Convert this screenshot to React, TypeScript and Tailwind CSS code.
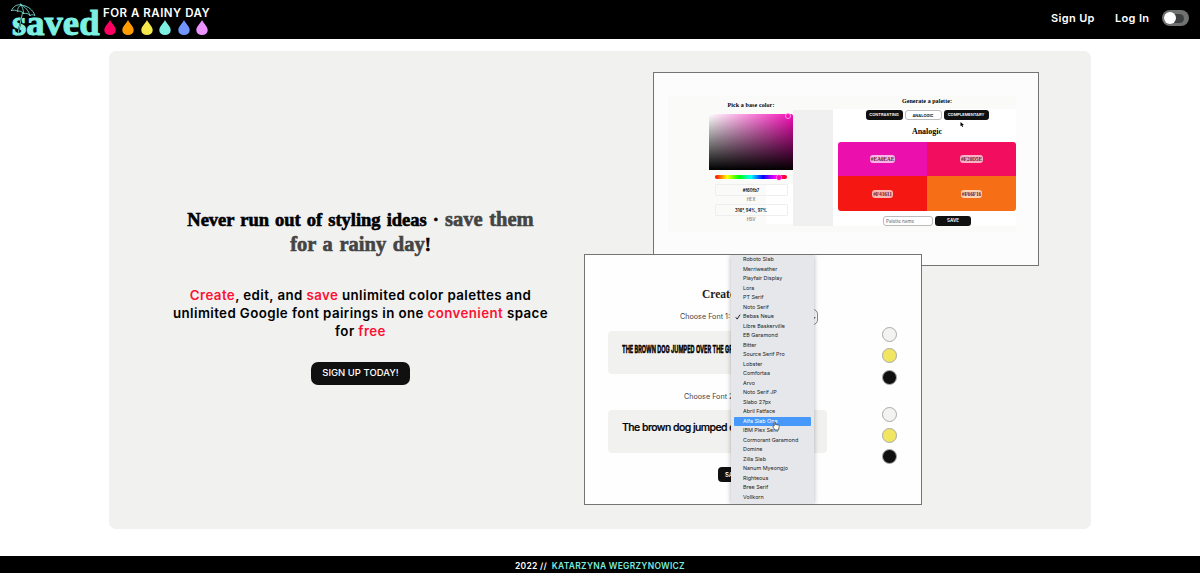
const fontNames = [
  "Roboto Slab", "Merriweather", "Playfair Display", "Lora", "PT Serif", "Noto Serif",
  "Bebas Neue", "Libre Baskerville", "EB Garamond", "Bitter", "Source Serif Pro", "Lobster",
  "Comfortaa", "Arvo", "Noto Serif JP", "Slabo 27px", "Abril Fatface", "Alfa Slab One",
  "IBM Plex Serif", "Cormorant Garamond", "Domine", "Zilla Slab", "Nanum Myeongjo",
  "Righteous", "Bree Serif", "Vollkorn",
];

const drops = ["#ff0062", "#ff9d00", "#f5e84c", "#7df0e2", "#7294ff", "#ea93ff"];

function Logo() {
  return (
    <svg width="90" height="39" viewBox="0 0 90 39" className="shrink-0 overflow-visible" aria-label="saved">
      <text x="2" y="34.800" fill="#7df0e2" stroke="#7df0e2" strokeWidth="1" fontSize="36" fontWeight="700" fontFamily="Liberation Serif, serif" textLength="87.500" lengthAdjust="spacingAndGlyphs">saved</text>
      <path d="M12.500 14 8 33" stroke="#000" strokeWidth="1.500" />
      <g fill="none" stroke="#7df0e2" strokeWidth=".8" strokeLinecap="round" strokeLinejoin="round">
        <path d="M1.500 10.500C3 6.500 7 4 11.500 5 18 6 23 10 25 15.500c-1.800-1-3.500-1-5 0-1.800-2-4-2.600-6.500-2-1.500-2-3.800-2.800-6-2.300-1.800-1.200-4-1.300-6-.7Z" />
        <path d="M11 5C8.500 6 7.500 8.500 7.500 11.200M11 5c1.500 2 2.500 5 2.500 8.500M11 5c4 1.500 7.500 5.500 9 10.500M11 5l-.3-1.200" />
        <path d="M12.500 13 8 33.500q-.8 2.800-3.200 1.500" />
      </g>
    </svg>
  );
}

function Header() {
  return (
    <header className="flex h-[39px] items-center bg-black pl-[10px] pr-[11px] text-white">
      <Logo />
      <div className="ml-[3px] flex h-full flex-col pt-[6px]">
        <div className="h-[14px] whitespace-nowrap text-[11.500px] font-semibold leading-[14px] tracking-[0.5px]">FOR A RAINY DAY</div>
        <div className="flex gap-[6.400px] pl-[1px]">
          {drops.map((c) => (
            <svg key={c} width="12" height="16" viewBox="0 0 12 16" fill={c}>
              <path d="M6 0C4.500 3.500.3 6.500.3 10.200a5.700 4.900 0 0 0 11.400 0C11.700 6.500 7.500 3.500 6 0Z" />
            </svg>
          ))}
        </div>
      </div>
      <nav className="ml-auto flex items-center pb-[3px] text-[11px] font-semibold tracking-[0.35px]">
        <a className="w-[44px] whitespace-nowrap pt-px">Sign Up</a>
        <a className="ml-5 w-[35px] whitespace-nowrap pt-px">Log In</a>
        <span className="ml-[12px] flex h-4 w-[27px] items-center rounded-full bg-[#707272] px-[2px]">
          <span className="flex h-[9px] w-[20px] items-center rounded-full bg-[#3d4040]">
            <span className="size-3 shrink-0 rounded-full bg-white" />
          </span>
        </span>
      </nav>
    </header>
  );
}

function Intro() {
  return (
    <section className="flex w-[475px] flex-col items-center pl-[28px] pt-[156px] text-center">
      <h1 className="whitespace-nowrap font-['Liberation_Serif',serif] text-[18.500px] font-bold leading-6 text-black [-webkit-text-stroke:0.6px] [word-spacing:1.500px]">
        <span className="tracking-[-0.02px]">Never run out of styling ideas · </span>
        <span className="text-[20.500px] text-[#444]">save them</span>
        <br />
        <span className="text-[20.500px] text-[#444]">for a rainy day</span>!
      </h1>
      <p className="mt-[29px] whitespace-nowrap text-[13.300px] font-semibold leading-[18.200px] tracking-[0.41px] text-black">
        <span className="text-[#fc1234]">Create</span>, edit, and <span className="text-[#fc1234]">save</span> unlimited color palettes and
        <br />
        unlimited Google font pairings in one <span className="text-[#fc1234]">convenient</span> space
        <br />
        for <span className="text-[#fc1234]">free</span>
      </p>
      <button className="mt-[21.400px] h-[23px] w-[99px] whitespace-nowrap rounded-[7px] bg-[#101010] text-[9.500px] font-medium text-white">SIGN UP TODAY!</button>
    </section>
  );
}

const swatches = [
  { bg: "bg-[#eb0fae]", chip: "bg-[#f8b4e4]", code: "#EA0EAE" },
  { bg: "bg-[#f20d5e]", chip: "bg-[#f9b1c9]", code: "#F20D5E" },
  { bg: "bg-[#f51812]", chip: "bg-[#fbb5b2]", code: "#F41611" },
  { bg: "bg-[#f66f16]", chip: "bg-[#fcd1b4]", code: "#F66F16" },
];

function ValueField({ value, label }: { value: string; label: string }) {
  return (
    <div className="h-5 w-[73px] text-center">
      <div className="h-3 rounded-[1px] border border-[#eeeeee] text-[4.200px] font-semibold leading-[11px] text-black">{value}</div>
      <div className="text-[4.200px] leading-[8px] text-[#555]">{label}</div>
    </div>
  );
}

function PaletteShot() {
  return (
    <div className="ml-[69px] h-[194px] w-[386px] border border-[#747474] bg-[#fcfcfc] pl-[14px] pt-[23px]">
      <div className="flex h-[136px] w-[348px] bg-[#fafaf9]">
        <div className="flex w-[125px] flex-col pl-[41px]">
          <div className="h-[18px] whitespace-nowrap text-center font-['Liberation_Serif',serif] text-[6px] font-bold leading-[19px] tracking-[0.1px]">Pick a base color:</div>
          <div className="flex h-14 justify-end rounded-t-[2px] bg-[linear-gradient(to_top,#000,transparent),linear-gradient(to_right,#fff,#f60fb7)] pr-[2px]">
            <span className="-mt-px size-[6px] rounded-full border border-[#ff9be0] bg-[#f60fb7]" />
          </div>
          <div className="ml-[6px] mt-[5px] flex h-1 w-[72px] items-center rounded-full bg-[linear-gradient(to_right,red,yellow,lime,cyan,blue,magenta,red)]">
            <span className="ml-[62px] h-[5px] w-1 rounded-full bg-[#f0b] ring-[0.5px] ring-[#ffb0e8]" />
          </div>
          <div className="mt-[5px] bg-[linear-gradient(to_right,transparent_57px,#fff_57px)] pl-[5.500px]">
            <ValueField value="#f60fb7" label="HEX" />
            <ValueField value="316°, 94%, 97%" label="HSV" />
          </div>
        </div>
        <div className="mb-[6px] mt-[14px] w-10 bg-[#f0f0f0]" />
        <div className="flex w-[183px] flex-col">
          <div className="h-[13px] pl-[5px] text-center font-['Liberation_Serif',serif] text-[6px] font-bold leading-[10px] tracking-[0.05px]">Generate a palette:</div>
          <div className="flex h-[117px] flex-col bg-white pl-[5px] pt-px">
            <div className="flex justify-center gap-[2px] text-[4px] font-semibold leading-[10px] text-white">
              <span className="h-[10px] w-[37px] rounded-[3px] bg-[#101010] text-center">CONTRASTING</span>
              <span className="h-[10px] w-[37px] rounded-[3px] border border-[#bbb] bg-white text-center leading-[9px] text-black">ANALOGIC</span>
              <span className="h-[10px] w-[45px] rounded-[3px] bg-[#101010] text-center">COMPLEMENTARY</span>
            </div>
            <div className="relative h-[21.500px] text-center font-['Liberation_Serif',serif] text-[8px] font-bold leading-[23px]">
              Analogic
              <svg className="absolute left-[122px] top-[2px]" width="4" height="5" viewBox="0 0 4 5"><path d="M.5 0v4.200l1-.8.800 1.600.9-.4-.8-1.500H4Z" /></svg>
            </div>
            <div className="grid h-[70px] grid-cols-2 grid-rows-2 overflow-hidden rounded-[3px]">
              {swatches.map((s) => (
                <div key={s.code} className={`flex items-center justify-center ${s.bg}`}>
                  <span className={`rounded-[3px] px-[1px] font-['Liberation_Serif',serif] text-[5.500px] font-bold leading-[8px] tracking-[-0.15px] text-[#6b2435] ${s.chip}`}>{s.code}</span>
                </div>
              ))}
            </div>
            <div className="mt-[5px] flex justify-center gap-[2px] text-[4.600px] leading-[9px]">
              <span className="h-[10px] w-[50px] rounded-[3px] border border-[#bbb] pl-[2px] text-[#666]">Palette name</span>
              <span className="h-[10px] w-9 rounded-[3px] bg-[#101010] text-center font-semibold leading-[10px] text-white">SAVE</span>
            </div>
          </div>
        </div>
      </div>
    </div>
  );
}

function ColorDots() {
  return (
    <div className="flex flex-col gap-[6.200px]">
      <span className="size-[15px] rounded-full border border-[#aaa] bg-[#f3f3f2]" />
      <span className="size-[15px] rounded-full border border-[#aaa] bg-[#f0e662]" />
      <span className="size-[15px] rounded-full border border-[#aaa] bg-[#101010]" />
    </div>
  );
}

function FontMenu() {
  return (
    <ul className="absolute left-[146px] top-0 h-full w-[83px] overflow-hidden bg-[#e5e7ea] px-[3px] text-[5.400px] font-normal text-[#222] shadow-[0_0_5px_rgba(0,0,0,0.3)]">
      {fontNames.map((name) => (
        <li key={name} className={`flex h-[9.500px] items-center whitespace-nowrap rounded-[1px] leading-[9px] ${name === "Alfa Slab One" ? "bg-[#4798fb] text-white" : ""}`}>
          <span className="w-[9px] pl-px">
            {name === "Bebas Neue" && (
              <svg width="6" height="6" viewBox="0 0 6 6" fill="none" stroke="#222" strokeWidth="1"><path d="m.8 3.300 1.400 1.800L5 .7" /></svg>
            )}
          </span>
          {name}
        </li>
      ))}
    </ul>
  );
}

function FontShot() {
  return (
    <div className="relative z-10 -mt-[12px] flex h-[251px] w-[338px] overflow-hidden border border-[#747474] bg-[#fefefe]">
      <div className="flex w-[243px] flex-col whitespace-nowrap pl-[23px]">
        <div className="mt-[31px] h-4 pl-[94px] font-['Liberation_Serif',serif] text-[11.500px] font-bold leading-4 text-[#222]">Create</div>
        <div className="mt-[7px] flex h-4 items-center pl-[72px] text-[7.200px] text-[#444]">
          Choose Font 1:
          <span className="ml-auto mr-[10px] flex h-4 w-[60px] items-center justify-end rounded-[5px] border border-[#888]">
            <span className="mr-[2px] size-[3px] rotate-45 border-b border-r border-[#555]" />
          </span>
        </div>
        <div className="mt-[6px] h-[43px] w-[180px] overflow-hidden rounded-[4px] bg-[#f1f1f0] pl-[14px] leading-[32px]">
          <span className="inline-block origin-left scale-x-[0.505] text-[11px] font-bold text-black [-webkit-text-stroke:0.5px]">THE BROWN DOG JUMPED OVER THE GRASS</span>
        </div>
        <div className="mt-[14px] h-4 pl-[76px] text-[7.200px] leading-[17px] text-[#444]">Choose Font 2:</div>
        <div className="mt-[6px] h-[43px] w-[219px] overflow-hidden rounded-[4px] bg-[#f1f1f0] pl-[14px] text-[10.500px] font-medium leading-[35px] tracking-[-0.55px] text-black [-webkit-text-stroke:0.2px]">The brown dog jumped over the grass.</div>
        <div className="ml-[110px] mt-[14px] h-[15px] w-[36px] rounded-[4px] bg-[#101010] pl-[7px] text-[6px] font-semibold leading-[15px] text-white">SAVE</div>
      </div>
      <div className="flex flex-col gap-[22px] pl-[54px] pt-[72.300px]">
        <ColorDots />
        <ColorDots />
      </div>
      <FontMenu />
      <svg className="absolute left-[187px] top-[166px]" width="8" height="10" viewBox="0 0 8 10" fill="#fff" stroke="#333" strokeWidth=".7">
        <path d="M2.200 5V1.200q.7-.8 1.200 0v2.300l3 .5q1 .4.8 1.500L6.500 9H3L.8 5.800q.2-.9 1.400-.8Z" />
      </svg>
    </div>
  );
}

export default function App() {
  return (
    <div className="flex h-[573px] w-[1200px] flex-col overflow-hidden bg-white font-['Inter',sans-serif]">
      <Header />
      <main className="h-[517px] pl-[109px] pt-[12px]">
        <div className="flex h-[478px] w-[982px] rounded-[7px] bg-[#f1f1f0]">
          <Intro />
          <div className="pt-[21px]">
            <PaletteShot />
            <FontShot />
          </div>
        </div>
      </main>
      <footer className="flex h-[17px] items-center justify-center whitespace-pre bg-black pt-[4px] text-[8.500px] font-semibold tracking-[0.26px] text-white">
        <span>2022 //  </span>
        <span className="text-[#7de8dc]">KATARZYNA WEGRZYNOWICZ</span>
      </footer>
    </div>
  );
}
